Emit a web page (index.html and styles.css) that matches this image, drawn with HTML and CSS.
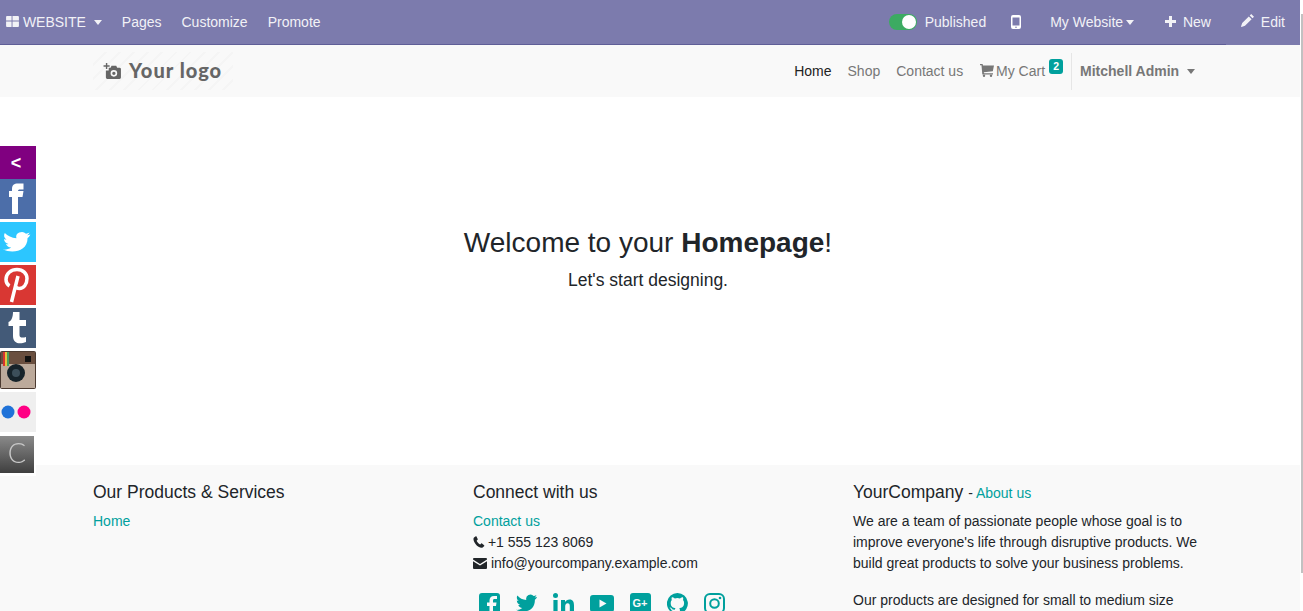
FILE: index.html
```html
<!DOCTYPE html>
<html lang="en">
<head>
  <meta charset="UTF-8" />
  <title>Home | My Website</title>
  <link rel="stylesheet" href="styles.css">
</head>
<body>

<div class="page">

<div class="topbar">
  <div class="topbar-left">
    <a class="top-link top-brand">
      <svg class="ico-apps" width="13" height="11" viewBox="0 0 14 12"><path d="M0 1a1 1 0 0 1 1-1h5v5H0zM7 0h6a1 1 0 0 1 1 1v4H7zM0 6h6v6H1a1 1 0 0 1-1-1zM7 6h7v5a1 1 0 0 1-1 1H7z" fill="#fff"/></svg>
      WEBSITE <span class="caret brand-caret"></span>
    </a>
    <a class="top-link">Pages</a>
    <a class="top-link">Customize</a>
    <a class="top-link">Promote</a>
  </div>
  <div class="topbar-right">
    <span class="toggle"><span class="toggle-knob"></span></span>
    <a class="top-link published">Published</a>
    <svg class="ico-mobile" width="10" height="14" viewBox="0 0 10 14"><path fill-rule="evenodd" d="M2 0h6a2 2 0 0 1 2 2v10a2 2 0 0 1-2 2H2a2 2 0 0 1-2-2V2a2 2 0 0 1 2-2zm-.5 2.500v8h7v-8zM5 11.400a.8.8 0 1 0 0 1.600.8.8 0 0 0 0-1.600z" fill="#fff"/></svg>
    <a class="top-link my-website">My Website<span class="caret"></span></a>
    <a class="top-link new-link">
      <svg width="11" height="11" viewBox="0 0 11 11"><path d="M4 0h3v4h4v3H7v4H4V7H0V4h4z" fill="#fff"/></svg>
      New
    </a>
    <a class="top-link edit-link">
      <svg width="13" height="13" viewBox="0 0 13 13"><path d="M10.200 0 13 2.800 11.500 4.300 8.700 1.500zM7.800 2.400l2.800 2.800L4 11.800.5 13l-.5-.5 1.200-3.500z" fill="#fff"/></svg>
      Edit
    </a>
  </div>
</div>

<header class="navbar">
  <div class="container navbar-inner">
    <a class="logo">
      <svg width="18" height="16" viewBox="0 0 19 17"><path fill-rule="evenodd" d="M3 0h1.500v2.500H7V4H4.500v2.500H3V4H.5V2.500H3zM6 5h2l1-2h5l1 2h2.500A1.500 1.500 0 0 1 19 6.500v9a1.500 1.500 0 0 1-1.500 1.500h-13A1.500 1.500 0 0 1 3 15.500V8h3zm5.500 2.500a3.500 3.500 0 1 0 0 7 3.500 3.500 0 0 0 0-7zm0 1.700a1.800 1.800 0 1 1 0 3.600 1.800 1.800 0 0 1 0-3.600z" fill="#666"/></svg>
      <span class="logo-text">Your logo</span>
    </a>
    <nav class="nav-links">
      <a class="nav-link active">Home</a>
      <a class="nav-link">Shop</a>
      <a class="nav-link">Contact us</a>
      <a class="nav-link cart-link">
        <svg width="14" height="13" viewBox="0 0 14 13"><path d="M0 0h2.600l.4 1.500h11l-1.200 5.800-9 1 .2 1h9v1.200H2.300L1.500 1.200H0z" fill="#777"/><circle cx="4" cy="11.800" r="1.200" fill="#777"/><circle cx="11" cy="11.800" r="1.200" fill="#777"/></svg>
        My Cart
        <span class="badge">2</span>
      </a>
      <a class="nav-link user-link">Mitchell Admin <span class="caret user-caret"></span></a>
    </nav>
  </div>
</header>

<main class="hero">
  <h1 class="hero-title">Welcome to your <b>Homepage</b>!</h1>
  <p class="hero-sub">Let's start designing.</p>
</main>

<footer class="footer">
  <div class="container footer-grid">
    <div class="footer-col">
      <h5 class="footer-head">Our Products &amp; Services</h5>
      <a class="footer-link">Home</a>
    </div>
    <div class="footer-col">
      <h5 class="footer-head">Connect with us</h5>
      <a class="footer-link">Contact us</a>
      <div class="contact-row">
        <svg class="ico-phone" width="12" height="12" viewBox="0 0 12 12"><path d="M2.800.3 1 1.500C0 2.500.3 5 2.500 8s5 4.200 6.800 3.700l1.800-1.500c.3-.3.300-.6 0-.9L9 7.500c-.3-.2-.6-.2-.8 0l-1 1C6.200 8 4 6 3.600 4.700l1-1c.2-.2.2-.5.1-.8L3.500.4C3.300.1 3 .1 2.800.3z" fill="#212529"/></svg>
        +1 555 123 8069
      </div>
      <div class="contact-row">
        <svg width="14" height="11" viewBox="0 0 14 11"><path d="M1 0h12a1 1 0 0 1 1 1v.6L7 6 0 1.600V1a1 1 0 0 1 1-1zM0 3.200 7 7.600l7-4.400V10a1 1 0 0 1-1 1H1a1 1 0 0 1-1-1z" fill="#212529"/></svg>
        info@yourcompany.example.com
      </div>
      <div class="social-row">
        <svg width="21" height="21" viewBox="0 0 21 21"><path fill-rule="evenodd" d="M3 0h15a3 3 0 0 1 3 3v15a3 3 0 0 1-3 3h-4v-8h3l.5-3.500H14V7.500c0-1 .5-1.500 1.500-1.500H18V3h-3c-3 0-4.500 1.800-4.500 4.500v2H8V13h2.500v8H3a3 3 0 0 1-3-3V3a3 3 0 0 1 3-3z" fill="#00a09d"/></svg>
        <svg width="21" height="21" viewBox="0 0 21 18"><path d="M21 2.200c-.8.300-1.600.6-2.500.7.900-.5 1.600-1.400 1.900-2.400-.8.500-1.800.9-2.700 1A4.300 4.300 0 0 0 10.300 5.400C6.700 5.200 3.500 3.500 1.400.9c-1.100 2-.6 4.400 1.300 5.700-.7 0-1.400-.2-1.900-.5 0 2.100 1.500 3.900 3.400 4.300-.6.200-1.300.2-1.900.1.500 1.700 2.100 2.900 4 3-1.900 1.500-4.200 2.100-6.300 1.800C7.300 19.100 19 17 18.900 5.300c.8-.6 1.500-1.300 2.100-3.100z" fill="#00a09d"/></svg>
        <svg width="21" height="21" viewBox="0 0 21 21"><circle cx="2.500" cy="2.500" r="2.500" fill="#00a09d"/><path d="M.4 7h4.200v14H.4zM8 7h4v2c1-1.500 2.500-2.400 4.500-2.400 3.500 0 4.500 2.400 4.500 6V21h-4.200v-7.500c0-2-.5-3.200-2.200-3.200s-2.400 1.300-2.400 3.200V21H8z" fill="#00a09d"/></svg>
        <svg width="24" height="21" viewBox="0 0 24 21"><path fill-rule="evenodd" d="M3 2h18a3 3 0 0 1 3 3v11a3 3 0 0 1-3 3H3a3 3 0 0 1-3-3V5a3 3 0 0 1 3-3zm6.500 4.500v8l7-4z" fill="#00a09d"/></svg>
        <svg width="21" height="21" viewBox="0 0 21 21"><rect width="21" height="21" rx="3" fill="#00a09d"/><text x="2.500" y="14" class="gplus">G+</text></svg>
        <svg width="21" height="21" viewBox="0 0 21 21"><path fill-rule="evenodd" d="M10.500 0a10.500 10.500 0 0 0-3.300 20.500c.5 0 .7-.2.700-.5v-2c-3 .6-3.600-1.300-3.600-1.300-.5-1.200-1.200-1.500-1.200-1.500-1-.7.100-.7.100-.7 1 .1 1.600 1.100 1.600 1.100 1 1.600 2.500 1.200 3.100.9.100-.7.400-1.200.7-1.400-2.400-.3-4.900-1.200-4.900-5.200 0-1.200.4-2.100 1.100-2.800-.1-.3-.5-1.300.1-2.800 0 0 .9-.3 2.900 1.100a10 10 0 0 1 5.200 0c2-1.400 2.900-1.100 2.900-1.100.6 1.500.2 2.500.1 2.800.7.700 1.100 1.700 1.100 2.800 0 4-2.500 4.900-4.900 5.200.4.300.7 1 .7 1.900V20c0 .3.200.6.700.5A10.500 10.500 0 0 0 10.500 0z" fill="#00a09d"/></svg>
        <svg width="21" height="21" viewBox="0 0 21 21"><rect x="1" y="1" width="19" height="19" rx="5" fill="none" stroke="#00a09d" stroke-width="2"/><circle cx="10.500" cy="10.500" r="4.300" fill="none" stroke="#00a09d" stroke-width="2"/><circle cx="16" cy="5" r="1.300" fill="#00a09d"/></svg>
      </div>
    </div>
    <div class="footer-col">
      <h5 class="footer-head company-head">YourCompany <small class="company-about">- <a class="footer-link">About us</a></small></h5>
      <p class="footer-text">We are a team of passionate people whose goal is to improve everyone's life through disruptive products. We build great products to solve your business problems.</p>
      <p class="footer-text">Our products are designed for small to medium size</p>
    </div>
  </div>
</footer>

</div>

<div class="share-bar">
  <div class="share-toggle">&lt;</div>
  <div class="share-item share-fb">
    <svg width="36" height="40" viewBox="0 0 36 40"><path d="M12 35V18H9v-6h3v-2c0-4 2-5.500 6-5.500h5.500v6H20c-1.500 0-2 .5-2 2V12h5.500l-1 6H18v17z" fill="#fff"/></svg>
  </div>
  <div class="share-item share-tw">
    <svg width="36" height="40" viewBox="0 0 36 40"><path transform="translate(3 10) scale(1.300 1.150)" d="M21 2.200c-.8.300-1.600.6-2.500.7.900-.5 1.600-1.400 1.900-2.400-.8.500-1.800.9-2.700 1A4.300 4.300 0 0 0 10.300 5.400C6.700 5.200 3.500 3.500 1.400.9c-1.100 2-.6 4.400 1.300 5.700-.7 0-1.400-.2-1.900-.5 0 2.100 1.500 3.900 3.400 4.300-.6.200-1.300.2-1.900.1.500 1.700 2.100 2.900 4 3-1.900 1.500-4.200 2.100-6.300 1.800C7.300 19.100 19 17 18.900 5.300c.8-.6 1.500-1.300 2.100-3.100z" fill="#fff"/></svg>
  </div>
  <div class="share-item share-pin">
    <svg width="36" height="40" viewBox="0 0 36 40"><path d="M9.500 21C7 19.500 6 17 6 14.500 6 8.500 11 4.500 17 4.500c6 0 10 4 10 9 0 6-3.500 10-7.500 10-2 0-3.500-1-4-2.500M18 11l-6.500 26" fill="none" stroke="#fff" stroke-width="3.500"/></svg>
  </div>
  <div class="share-item share-tm">
    <svg width="36" height="40" viewBox="0 0 36 40"><path d="M13 4h6.500v8H26v6h-6.500v9c0 3 3 3 6.500 2v5c-7 3-13 1-13-6V18H8.500v-4c3-1 4.500-5 4.500-10z" fill="#fff"/></svg>
  </div>
  <div class="share-item share-in">
    <svg width="36" height="38" viewBox="0 0 36 38">
      <rect width="36" height="38" rx="2" fill="#4b3a30"/>
      <rect x="1" y="1" width="34" height="12" fill="#6a4f3f"/>
      <rect x="1" y="13" width="34" height="24" fill="#bcaa9b"/>
      <rect x="3" y="1" width="2" height="14" fill="#d8342f"/>
      <rect x="5" y="1" width="2" height="14" fill="#e6c23c"/>
      <rect x="7" y="1" width="2" height="14" fill="#4aa05a"/>
      <rect x="25" y="5" width="6" height="6" fill="#111"/>
      <circle cx="16" cy="22" r="9" fill="#16232a"/>
      <circle cx="16" cy="22" r="4" fill="#3c4f5a"/>
    </svg>
  </div>
  <div class="share-item share-fl">
    <svg width="36" height="40" viewBox="0 0 36 40"><circle cx="8" cy="20" r="6.500" fill="#1f72d8"/><circle cx="24" cy="20" r="6.500" fill="#ff0084"/></svg>
  </div>
  <div class="share-item share-c">
    <span class="share-c-box">C</span>
  </div>
</div>

<div class="scroll-thumb"></div>

</body>
</html>
```

FILE: styles.css
```css
html, body {
  height: 100%;
  overflow: hidden;
}
body {
  margin: 0;
  font-family: "Liberation Sans", Arial, sans-serif;
  font-size: 14px;
  line-height: 21px;
  color: #212529;
  background: #fff;
}
a {
  text-decoration: none;
}
.page {
  width: 1300px;
}
.caret {
  display: inline-block;
  width: 0;
  height: 0;
  border-top: 5px solid currentColor;
  border-left: 4.5px solid transparent;
  border-right: 4.5px solid transparent;
  vertical-align: 2px;
}

/* top admin bar */
.topbar {
  display: flex;
  justify-content: space-between;
  align-items: center;
  height: 45px;
  padding-bottom: 1px;
  box-sizing: border-box;
  background: linear-gradient(#5f5e97, #5f5e97) 0 100% / 1226px 1px no-repeat, #7c7bad;
  color: #fff;
}
.topbar-left, .topbar-right {
  display: flex;
  align-items: center;
}
.topbar-left {
  padding-left: 6px;
}
.topbar-right {
  padding-right: 15px;
}
.top-link {
  color: #fff;
  opacity: 0.9;
  white-space: nowrap;
}
.top-brand {
  margin-right: 20px;
}
.brand-caret {
  margin-left: 4px;
}
.topbar-left .top-link + .top-link {
  margin-right: 20px;
}
.toggle {
  width: 28px;
  height: 16px;
  border-radius: 8px;
  background: #3cab62;
  display: flex;
  justify-content: flex-end;
  align-items: center;
  padding-right: 1px;
  box-sizing: border-box;
  margin-right: 8px;
}
.toggle-knob {
  width: 14px;
  height: 14px;
  border-radius: 50%;
  background: #fff;
}
.ico-mobile {
  margin-left: 25px;
}
.my-website {
  margin-left: 29px;
}
.my-website .caret {
  margin-left: 3px;
}
.new-link {
  margin-left: 31px;
}
.new-link svg {
  margin-right: 3px;
}
.edit-link {
  margin-left: 30px;
}
.edit-link svg {
  margin-right: 3px;
}

/* site navbar */
.navbar {
  background: #f9f9f9;
  height: 52px;
}
.container {
  width: 1110px;
  margin-left: 93px;
}
.navbar-inner {
  display: flex;
  justify-content: space-between;
  align-items: center;
  height: 100%;
}
.logo {
  display: flex;
  align-items: center;
  width: 140px;
  height: 38px;
  padding-left: 10px;
  box-sizing: border-box;
  background: repeating-linear-gradient(135deg, #f9f9f9 0 8px, #f5f5f5 8px 10px);
}
.logo-text {
  margin: -2px 0 0 8px;
  font-family: Lato, "Liberation Sans", sans-serif;
  font-weight: 900;
  font-size: 20px;
  letter-spacing: 1px;
  color: #666;
}
.nav-links {
  display: flex;
  align-items: center;
}
.nav-link {
  color: #777;
  padding: 0 8px;
  white-space: nowrap;
}
.nav-link.active {
  color: #222;
}
.cart-link {
  position: relative;
  padding-left: 9px;
  padding-right: 26px;
}
.cart-link svg {
  margin-right: -2px;
  vertical-align: -1px;
}
.badge {
  position: absolute;
  top: -2px;
  right: 8px;
  width: 14px;
  height: 15px;
  border-radius: 3px;
  background: #00a09d;
  color: #fff;
  font-size: 10.500px;
  font-weight: bold;
  line-height: 15px;
  text-align: center;
}
.user-link {
  height: 37px;
  line-height: 37px;
  border-left: 1px solid #e6e6e6;
  font-weight: bold;
  padding: 0 8px;
}
.user-caret {
  margin-left: 4px;
}

/* floating share bar */
.share-bar {
  position: fixed;
  top: 146px;
  left: 0;
  width: 36px;
}
.share-toggle {
  height: 33px;
  padding-right: 4px;
  box-sizing: border-box;
  background: #800080;
  color: #fff;
  font-weight: bold;
  font-size: 18px;
  line-height: 35px;
  text-align: center;
}
.share-item {
  height: 40px;
  margin-bottom: 3px;
  overflow: hidden;
}
.share-item svg {
  display: block;
}
.share-fb { background: #4c6ea9; }
.share-tw { background: #2cc6ff; }
.share-pin { background: #d93733; }
.share-tm { background: #435a78; }
.share-in {
  height: 38px;
  background: #fff;
}
.share-fl { background: #efefef; }
.share-c {
  padding-top: 1px;
  background: #fff;
}
.share-c-box {
  display: block;
  width: 34px;
  height: 37px;
  background: linear-gradient(#8a8a8a, #3f3f3f);
  color: #c8c8c8;
  font-family: Lato, "Liberation Sans", sans-serif;
  font-weight: 300;
  font-size: 27px;
  line-height: 34px;
  text-align: center;
}

/* thin page scrollbar */
.scroll-thumb {
  position: fixed;
  top: 14px;
  right: 0;
  width: 2px;
  height: 559px;
  background: #c1c1c1;
}

/* homepage hero */
.hero {
  height: 368px;
  box-sizing: border-box;
  padding-top: 129px;
  width: 1296px;
  text-align: center;
}
.hero-title {
  margin: 0;
  font-size: 28px;
  font-weight: normal;
  line-height: 34px;
}
.hero-sub {
  margin: 7px 0 0;
  font-size: 17.500px;
  line-height: 26px;
}

/* footer */
.footer {
  background: #f9f9f9;
  height: 146px;
  overflow: hidden;
}
.footer-grid {
  display: grid;
  grid-template-columns: 380px 380px 350px;
  padding-top: 17px;
}
.footer-head {
  margin: 0 0 8px;
  font-size: 17.500px;
  font-weight: normal;
  line-height: 21px;
}
.company-head {
  margin-bottom: 7px;
}
.footer-link {
  color: #00a09d;
  display: block;
}
.company-about {
  font-size: 14px;
}
.company-about .footer-link {
  display: inline;
}
.contact-row svg {
  vertical-align: -1px;
}
.contact-row .ico-phone {
  margin-right: -1px;
}
.social-row {
  display: flex;
  gap: 16px;
  align-items: center;
  margin: 19px 0 0 6px;
}
.gplus {
  font-family: "Liberation Sans", sans-serif;
  font-size: 11px;
  font-weight: bold;
  fill: #f9f9f9;
}
.footer-text {
  margin: 0 0 16px;
}
```
